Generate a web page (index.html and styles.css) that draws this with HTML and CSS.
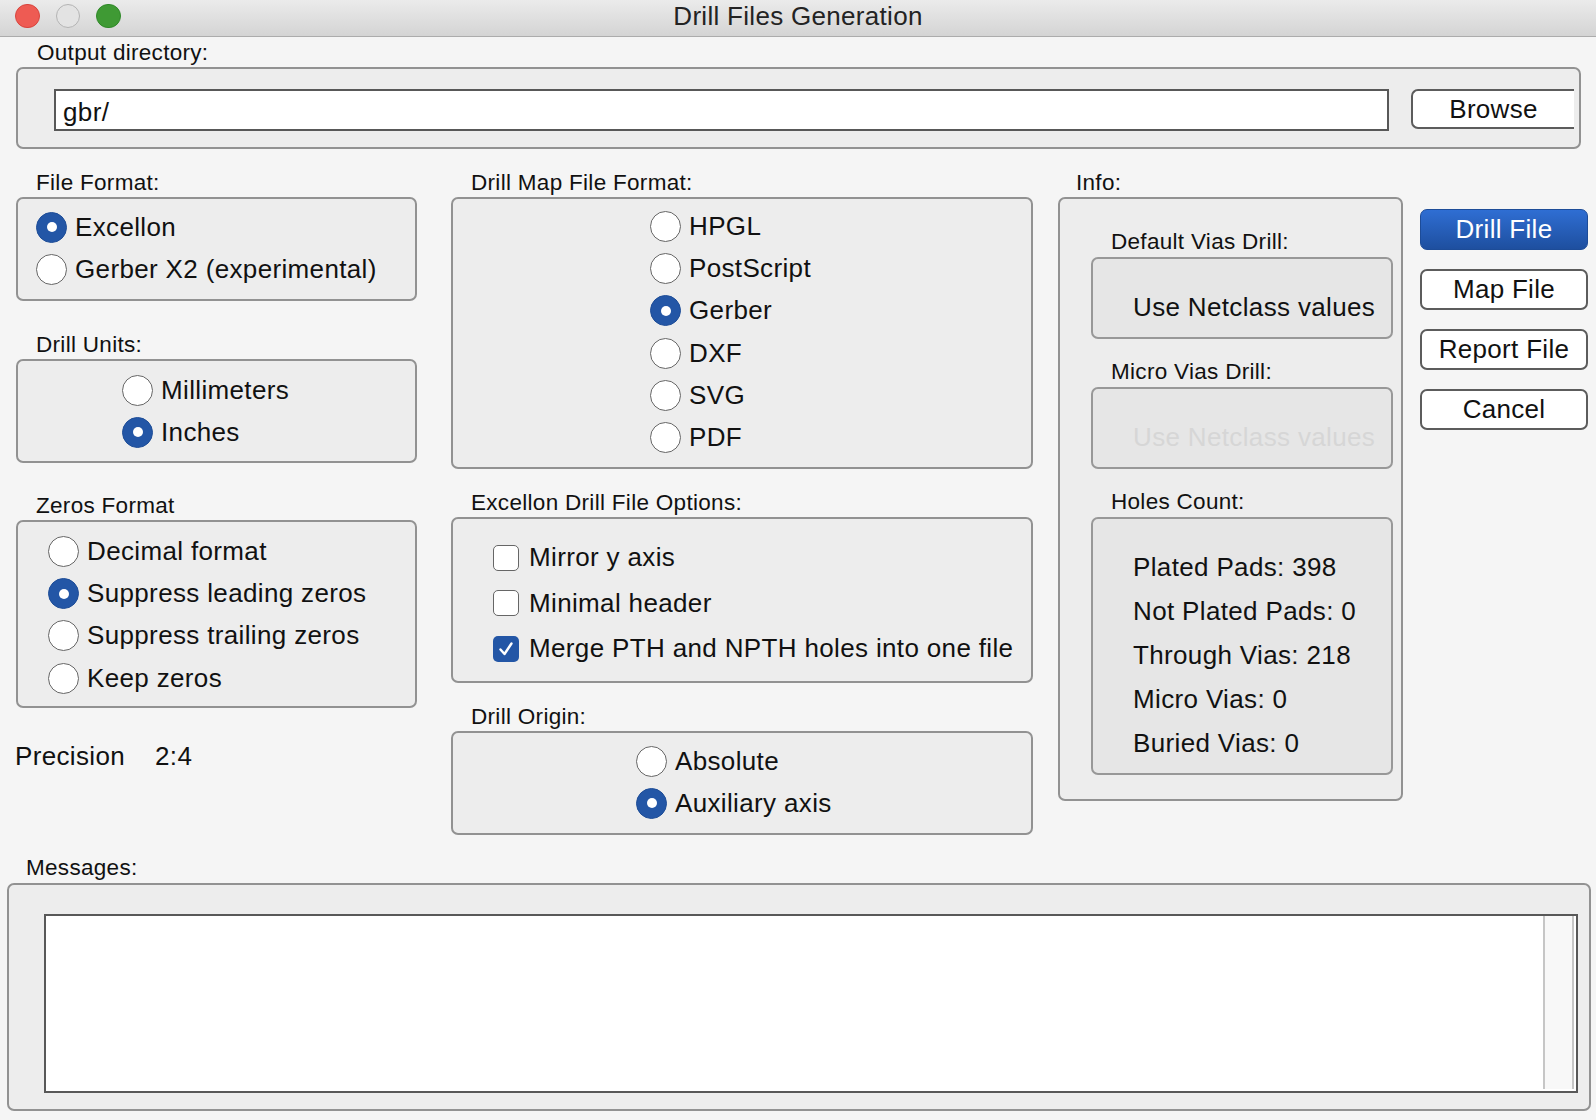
FILE: index.html
```html
<!DOCTYPE html>
<html>
<head>
<meta charset="utf-8">
<title>Drill Files Generation</title>
<link rel="stylesheet" href="styles.css">
</head>
<body>
<div class="window">
  <div class="titlebar">
    <div class="lights">
      <span class="light red"></span>
      <span class="light gray"></span>
      <span class="light green"></span>
    </div>
    <div class="title">Drill Files Generation</div>
    <div></div>
  </div>

  <div class="label out-label">Output directory:</div>
  <div class="box out-box">
    <div class="text-input">gbr/</div>
    <div class="btn browse">Browse</div>
  </div>

  <div class="main">
    <div class="col col1">
      <div class="label">File Format:</div>
      <div class="box box-fmt">
        <div class="opt"><span class="radio on"></span><span>Excellon</span></div>
        <div class="opt"><span class="radio"></span><span>Gerber X2 (experimental)</span></div>
      </div>
      <div class="label gap-label">Drill Units:</div>
      <div class="box box-units">
        <div class="opt"><span class="radio"></span><span>Millimeters</span></div>
        <div class="opt"><span class="radio on"></span><span>Inches</span></div>
      </div>
      <div class="label gap-label2">Zeros Format</div>
      <div class="box box-zeros">
        <div class="opt"><span class="radio"></span><span>Decimal format</span></div>
        <div class="opt"><span class="radio on"></span><span>Suppress leading zeros</span></div>
        <div class="opt"><span class="radio"></span><span>Suppress trailing zeros</span></div>
        <div class="opt"><span class="radio"></span><span>Keep zeros</span></div>
      </div>
      <div class="precision"><span class="prec-name">Precision</span><span>2:4</span></div>
    </div>

    <div class="col col2">
      <div class="label">Drill Map File Format:</div>
      <div class="box box-map">
        <div class="opt"><span class="radio"></span><span>HPGL</span></div>
        <div class="opt"><span class="radio"></span><span>PostScript</span></div>
        <div class="opt"><span class="radio on"></span><span>Gerber</span></div>
        <div class="opt"><span class="radio"></span><span>DXF</span></div>
        <div class="opt"><span class="radio"></span><span>SVG</span></div>
        <div class="opt"><span class="radio"></span><span>PDF</span></div>
      </div>
      <div class="label mid-label">Excellon Drill File Options:</div>
      <div class="box box-opts">
        <div class="chk-row"><span class="check"></span><span>Mirror y axis</span></div>
        <div class="chk-row"><span class="check"></span><span>Minimal header</span></div>
        <div class="chk-row"><span class="check on"><svg viewBox="0 0 26 26" width="26" height="26"><path d="M7.5 13.5 L11.5 18 L18.5 7.5" fill="none" stroke="#fff" stroke-width="2.4" stroke-linecap="round" stroke-linejoin="round"/></svg></span><span>Merge PTH and NPTH holes into one file</span></div>
      </div>
      <div class="label mid-label2">Drill Origin:</div>
      <div class="box box-origin">
        <div class="opt"><span class="radio"></span><span>Absolute</span></div>
        <div class="opt"><span class="radio on"></span><span>Auxiliary axis</span></div>
      </div>
    </div>

    <div class="col col3">
      <div class="label info-label">Info:</div>
      <div class="box box-info">
        <div class="label sub-label first">Default Vias Drill:</div>
        <div class="subbox vias">
          <div class="sub-text">Use Netclass values</div>
        </div>
        <div class="label sub-label">Micro Vias Drill:</div>
        <div class="subbox vias">
          <div class="sub-text disabled">Use Netclass values</div>
        </div>
        <div class="label sub-label">Holes Count:</div>
        <div class="subbox holes">
          <div class="hole-line">Plated Pads: 398</div>
          <div class="hole-line">Not Plated Pads: 0</div>
          <div class="hole-line">Through Vias: 218</div>
          <div class="hole-line">Micro Vias: 0</div>
          <div class="hole-line">Buried Vias: 0</div>
        </div>
      </div>
    </div>

    <div class="col col4">
      <div class="btn primary">Drill File</div>
      <div class="btn">Map File</div>
      <div class="btn">Report File</div>
      <div class="btn">Cancel</div>
    </div>
  </div>

  <div class="label msg-label">Messages:</div>
  <div class="box msg-box">
    <div class="textarea">
      <div class="scroll-track"></div>
    </div>
  </div>
</div>
</body>
</html>
```

FILE: styles.css
```css
html, body {
  margin: 0;
  padding: 0;
}
body {
  background: #f5f5f5;
  font-family: "Liberation Sans", Arial, Helvetica, sans-serif;
  color: #111;
}
.window {
  width: 1596px;
  height: 1120px;
  overflow: hidden;
  display: flex;
  flex-direction: column;
  box-sizing: border-box;
}

/* Title bar */
.titlebar {
  height: 37px;
  box-sizing: border-box;
  border-bottom: 1px solid #acacac;
  background: linear-gradient(#ebebeb, #d4d4d4);
  display: grid;
  grid-template-columns: 1fr auto 1fr;
  align-items: center;
  flex: none;
}
.lights {
  display: flex;
  gap: 16px;
  padding-left: 15px;
  padding-bottom: 4px;
}
.light {
  width: 24.5px;
  height: 24.5px;
  border-radius: 50%;
  box-sizing: border-box;
}
.light.red { background: #ee5b53; border: 1px solid #d8453e; }
.light.gray { background: #e3e3e3; border: 1.5px solid #b4b4b4; }
.light.green { background: #3f9a34; border: 1px solid #2f8928; }
.title {
  font-size: 26px;
  letter-spacing: 0.3px;
  color: #232323;
  padding-bottom: 4px;
}

/* Labels */
.label {
  font-size: 22.5px;
  letter-spacing: 0.3px;
  line-height: 24px;
  height: 24px;
  color: #111;
  white-space: nowrap;
}

/* Group boxes */
.box {
  box-sizing: border-box;
  background: #ededed;
  border: 2px solid #929292;
  border-radius: 7px;
  flex: none;
}

/* Output directory */
.out-label {
  margin-top: 4px;
  padding-left: 37px;
}
.out-box {
  margin: 2px 0 0 16px;
  width: 1565px;
  height: 82px;
  display: flex;
  align-items: flex-start;
  padding: 20px 0 0 36px;
}
.text-input {
  width: 1335px;
  height: 42px;
  box-sizing: border-box;
  background: #fff;
  border: 2px solid #585858;
  font-size: 26px;
  letter-spacing: 0.4px;
  line-height: 38px;
  padding-left: 7px;
  padding-top: 2px;
  color: #111;
}
.btn {
  box-sizing: border-box;
  height: 41px;
  background: #fff;
  border: 2px solid #5c5c5c;
  border-radius: 7px;
  font-size: 26px;
  letter-spacing: 0.3px;
  line-height: 37px;
  text-align: center;
  color: #111;
}
.browse {
  margin-left: 22px;
  width: 163px;
  height: 40px;
  border-right: none;
  border-radius: 7px 0 0 7px;
}

/* Main area */
.main {
  display: flex;
  align-items: flex-start;
  margin-top: 22px;
  padding-left: 16px;
  flex: none;
}
.col {
  display: flex;
  flex-direction: column;
  flex: none;
}
.col > .label {
  padding-left: 20px;
}
.col1 { width: 401px; }
.col2 { width: 582px; margin-left: 34px; }
.col3 { width: 345px; margin-left: 25px; }
.col4 { width: 168px; margin-left: 17px; margin-top: 37.5px; gap: 19px; }

.col .box { margin-top: 2px; }

.opt {
  display: flex;
  align-items: center;
  gap: 8px;
  height: 42px;
  font-size: 26px;
  letter-spacing: 0.35px;
  white-space: nowrap;
}
.radio {
  width: 31px;
  height: 31px;
  box-sizing: border-box;
  border-radius: 50%;
  background: #fff;
  border: 1.5px solid #666;
  flex: none;
  display: flex;
  align-items: center;
  justify-content: center;
}
.radio.on {
  background: #2356a6;
  border-color: #1f4e98;
}
.radio.on::after {
  content: "";
  width: 10px;
  height: 10px;
  border-radius: 50%;
  background: #fff;
}

.box-fmt {
  height: 104px;
  padding: 7px 0 0 18px;
}
.gap-label { margin-top: 31.5px; }
.box-units {
  height: 104px;
  padding: 8.5px 0 0 104px;
}
.gap-label2 { margin-top: 31px; }
.box-zeros {
  height: 188px;
  padding: 9px 0 0 30px;
}
.box-zeros .opt { height: 42.2px; }
.precision {
  margin-top: 27px;
  margin-left: -1px;
  height: 42px;
  line-height: 42px;
  font-size: 26px;
  letter-spacing: 0.35px;
  display: flex;
}
.prec-name {
  width: 140px;
}

.box-map {
  height: 272px;
  padding: 6.5px 0 0 197px;
}
.box-map .opt { height: 42.2px; }
.mid-label { margin-top: 22px; }
.box-opts {
  height: 166px;
  padding: 16px 0 0 40px;
}
.chk-row {
  display: flex;
  align-items: center;
  gap: 10px;
  height: 45.5px;
  font-size: 26px;
  letter-spacing: 0.35px;
  white-space: nowrap;
}
.check {
  width: 26px;
  height: 26px;
  box-sizing: border-box;
  border-radius: 5px;
  background: #fff;
  border: 1.5px solid #666;
  flex: none;
  display: flex;
}
.check.on {
  background: #2356a6;
  border: none;
}
.mid-label2 { margin-top: 21.5px; }
.box-origin {
  height: 104px;
  padding: 7.5px 0 0 183px;
}

/* Info */
.col3 > .info-label { padding-left: 18px; }
.box-info {
  height: 604px;
  padding: 31px 0 0 31px;
  display: flex;
  flex-direction: column;
}
.sub-label {
  padding-left: 20px;
  margin-top: 21px;
}
.sub-label.first { margin-top: 0; }
.subbox {
  box-sizing: border-box;
  width: 302px;
  margin-top: 3px;
  background: #e6e6e6;
  border: 2px solid #989898;
  border-radius: 7px;
  padding-left: 40px;
}
.vias {
  height: 82px;
  padding-top: 27px;
}
.sub-text {
  font-size: 26px;
  letter-spacing: 0.35px;
  line-height: 42px;
  white-space: nowrap;
}
.sub-text.disabled {
  color: #d6d6d6;
}
.holes {
  height: 258px;
  padding-top: 26px;
}
.hole-line {
  font-size: 26px;
  letter-spacing: 0.35px;
  line-height: 44px;
  height: 44px;
  white-space: nowrap;
}

/* Buttons */
.btn.primary {
  background: linear-gradient(#2f6ed3, #1e4f9f);
  border: 1px solid #1d4c98;
  color: #fff;
  line-height: 39px;
}

/* Messages */
.msg-label {
  margin-top: 21px;
  padding-left: 26px;
}
.msg-box {
  margin: 3px 0 0 7px;
  width: 1584px;
  height: 228px;
  padding: 29px 0 0 35px;
}
.textarea {
  box-sizing: border-box;
  width: 1534px;
  height: 179px;
  background: #fff;
  border: 2px solid #585858;
  display: flex;
  justify-content: flex-end;
}
.scroll-track {
  width: 31px;
  box-sizing: border-box;
  background: #f8f8f8;
  border-left: 2px solid #c6c6c6;
  border-right: 2px solid #c6c6c6;
  margin-right: 2px;
  margin-bottom: 2px;
}
```
